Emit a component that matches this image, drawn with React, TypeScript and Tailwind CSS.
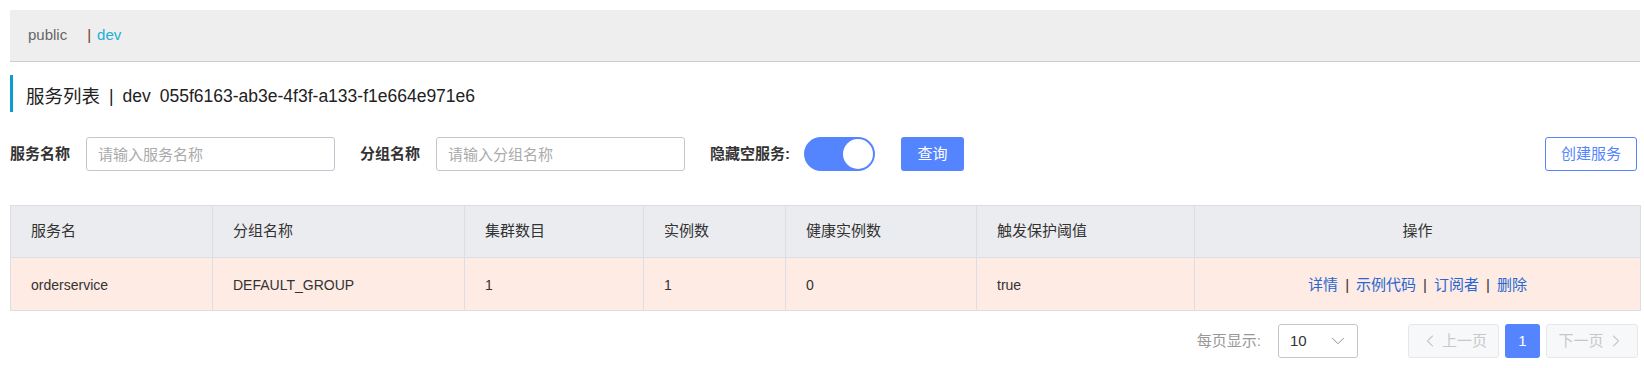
import React from 'react'
import { ChevronDown, ChevronLeft, ChevronRight } from 'lucide-react'

const font = { fontFamily: '"Liberation Sans", "Noto Sans CJK SC", sans-serif' }

const columns = ['服务名', '分组名称', '集群数目', '实例数', '健康实例数', '触发保护阈值', '操作']
const widths = ['w-[202px]', 'w-[252px]', 'w-[179px]', 'w-[142px]', 'w-[191px]', 'w-[218px]', 'w-[446px]']

const row = ['orderservice', 'DEFAULT_GROUP', '1', '1', '0', 'true']

const App = () => {
  return (
    <div className="w-[1644px] h-[368px] bg-white pl-[10px] pr-[4px] pt-[10px] text-[#333]" style={font}>
      {/* namespace bar */}
      <div className="h-[52px] bg-[#eeeeee] border-b border-[#cccccc] flex items-center pl-[18px] text-[15px]">
        <span className="text-[#666]">public</span>
        <span className="ml-[20px] text-[#7a3a26]">|</span>
        <span className="ml-[6px] text-[#22b0d6]">dev</span>
      </div>

      {/* title */}
      <div className="mt-[13px] h-[37px] border-l-[3px] border-[#0f9ad1] flex items-center pl-[13px] pt-[6px] text-[17.5px] text-[#222]">
        <span className="text-[18.5px]">服务列表</span>
        <span className="mx-[9px]">|</span>
        <span>dev</span>
        <span className="ml-[9px]">055f6163-ab3e-4f3f-a133-f1e664e971e6</span>
      </div>

      {/* filters */}
      <div className="mt-[25px] flex items-center h-[34px] text-[15px]">
        <span className="font-bold text-[#333] w-[60px]">服务名称</span>
        <input
          className="ml-[16px] w-[249px] h-[34px] border border-[#c4c6cf] rounded-[3px] px-[11px] text-[15px] outline-none placeholder:text-[#aaa]"
          placeholder="请输入服务名称"
          style={font}
        />
        <span className="ml-[25px] font-bold text-[#333] w-[61px]">分组名称</span>
        <input
          className="ml-[15px] w-[249px] h-[34px] border border-[#c4c6cf] rounded-[3px] px-[11px] text-[15px] outline-none placeholder:text-[#aaa]"
          placeholder="请输入分组名称"
          style={font}
        />
        <span className="ml-[25px] font-bold text-[#333]">隐藏空服务:</span>
        <div className="ml-[14px] w-[71px] h-[34px] rounded-full bg-[#5584ff] flex items-center justify-end pr-[2px]">
          <div className="w-[30px] h-[30px] rounded-full bg-white"></div>
        </div>
        <button className="ml-[26px] w-[63px] h-[34px] rounded-[3px] bg-[#5584ff] text-white text-[15px]">查询</button>
        <div className="flex-1"></div>
        <button className="mr-[3px] w-[92px] h-[34px] rounded-[3px] border border-[#5584ff] text-[#5584ff] bg-white text-[15px]">
          创建服务
        </button>
      </div>

      {/* table */}
      <table className="mt-[34px] w-[1630px] table-fixed border-collapse text-[14px]">
        <colgroup>
          {widths.map((w, i) => (
            <col key={i} className={w} />
          ))}
        </colgroup>
        <thead>
          <tr className="h-[52px] bg-[#ebecf0]">
            {columns.map((c, i) => (
              <th
                key={c}
                className={`border border-[#dcdee3] font-normal text-[15px] text-[#333] ${i === 6 ? 'text-center' : 'text-left pl-[20px]'}`}
              >
                {c}
              </th>
            ))}
          </tr>
        </thead>
        <tbody>
          <tr className="h-[53px] bg-[#feebe3]">
            {row.map((v, i) => (
              <td key={i} className="border border-[#dcdee3] pl-[20px] pt-[2px] text-[#333]">
                {v}
              </td>
            ))}
            <td className="border border-[#dcdee3] text-center pt-[2px] text-[15px] text-[#2866d1]">
              <span>详情</span>
              <span className="mx-[7px] text-[#333]">|</span>
              <span>示例代码</span>
              <span className="mx-[7px] text-[#333]">|</span>
              <span>订阅者</span>
              <span className="mx-[7px] text-[#333]">|</span>
              <span>删除</span>
            </td>
          </tr>
        </tbody>
      </table>

      {/* pagination */}
      <div className="mt-[13px] flex items-center justify-end pr-[2px] text-[15px]">
        <span className="text-[#999]">每页显示:</span>
        <div className="ml-[17px] w-[80px] h-[34px] border border-[#c4c6cf] rounded-[3px] flex items-center justify-between pl-[11px] pr-[8px]">
          <span className="text-[#333]">10</span>
          <ChevronDown size={22} strokeWidth={1} className="text-[#888]" />
        </div>
        <button className="ml-[50px] w-[91px] h-[34px] rounded-[3px] border border-[#e6e7eb] bg-[#f7f8fa] text-[#c8c8c8] flex items-center justify-center gap-[2px]">
          <ChevronLeft size={20} strokeWidth={1.3} />
          <span>上一页</span>
        </button>
        <button className="ml-[6px] w-[35px] h-[34px] rounded-[3px] bg-[#5584ff] text-white">1</button>
        <button className="ml-[6px] w-[92px] h-[34px] rounded-[3px] border border-[#e6e7eb] bg-[#f7f8fa] text-[#c8c8c8] flex items-center justify-center gap-[2px]">
          <span>下一页</span>
          <ChevronRight size={20} strokeWidth={1.3} />
        </button>
      </div>
    </div>
  )
}

export default App
